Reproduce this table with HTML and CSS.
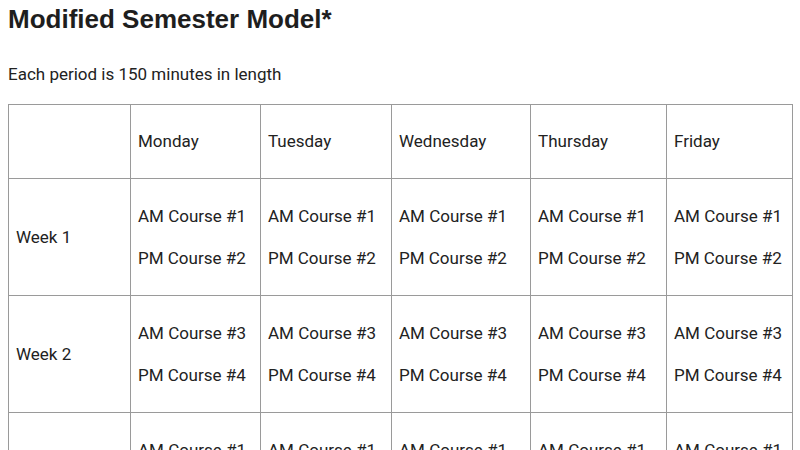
FILE: index.html
```html
<!DOCTYPE html>
<html lang="en">
<head>
<meta charset="utf-8">
<title>Modified Semester Model</title>
<link rel="stylesheet" href="styles.css">
</head>
<body>
<h1 class="title">Modified Semester Model*</h1>
<p class="intro">Each period is 150 minutes in length</p>
<table class="schedule">
  <colgroup>
    <col class="c-week">
    <col class="c-mon">
    <col class="c-tue">
    <col class="c-wed">
    <col class="c-thu">
    <col class="c-fri">
  </colgroup>
  <tr class="head-row">
    <td></td>
    <td><p>Monday</p></td>
    <td><p>Tuesday</p></td>
    <td><p>Wednesday</p></td>
    <td><p>Thursday</p></td>
    <td><p>Friday</p></td>
  </tr>
  <tr>
    <td><p>Week 1</p></td>
    <td><p>AM Course #1</p><p>PM Course #2</p></td>
    <td><p>AM Course #1</p><p>PM Course #2</p></td>
    <td><p>AM Course #1</p><p>PM Course #2</p></td>
    <td><p>AM Course #1</p><p>PM Course #2</p></td>
    <td><p>AM Course #1</p><p>PM Course #2</p></td>
  </tr>
  <tr>
    <td><p>Week 2</p></td>
    <td><p>AM Course #3</p><p>PM Course #4</p></td>
    <td><p>AM Course #3</p><p>PM Course #4</p></td>
    <td><p>AM Course #3</p><p>PM Course #4</p></td>
    <td><p>AM Course #3</p><p>PM Course #4</p></td>
    <td><p>AM Course #3</p><p>PM Course #4</p></td>
  </tr>
  <tr>
    <td><p>Week 3</p></td>
    <td><p>AM Course #1</p><p>PM Course #2</p></td>
    <td><p>AM Course #1</p><p>PM Course #2</p></td>
    <td><p>AM Course #1</p><p>PM Course #2</p></td>
    <td><p>AM Course #1</p><p>PM Course #2</p></td>
    <td><p>AM Course #1</p><p>PM Course #2</p></td>
  </tr>
</table>
</body>
</html>
```
FILE: styles.css
```css
html, body {
  background: #fff;
}
body {
  margin: 0;
  padding: 0 8px;
  font-family: Roboto, "Liberation Sans", sans-serif;
  font-size: 17px;
  color: #222;
}
.title {
  font-family: "Liberation Sans", Arial, sans-serif;
  font-weight: bold;
  font-size: 26px;
  line-height: 30px;
  margin: 4px 0 0 0;
  color: #1e1e1e;
}
.intro {
  margin: 30px 0 0 0;
  line-height: 20px;
}
.schedule {
  margin-top: 20px;
  width: 100%;
  border-collapse: collapse;
  table-layout: fixed;
}
.schedule td {
  border: 1px solid #9a9a9a;
  padding: 8px 8px 8px 7px;
  vertical-align: middle;
  text-align: left;
  white-space: nowrap;
}
.schedule p {
  margin: 16px 0;
  line-height: 26px;
}
.head-row p {
  line-height: 25px;
}
.c-week { width: 122px; }
.c-mon { width: 130px; }
.c-tue { width: 131px; }
.c-wed { width: 139px; }
.c-thu { width: 136px; }
.c-fri { width: 126px; }
```
